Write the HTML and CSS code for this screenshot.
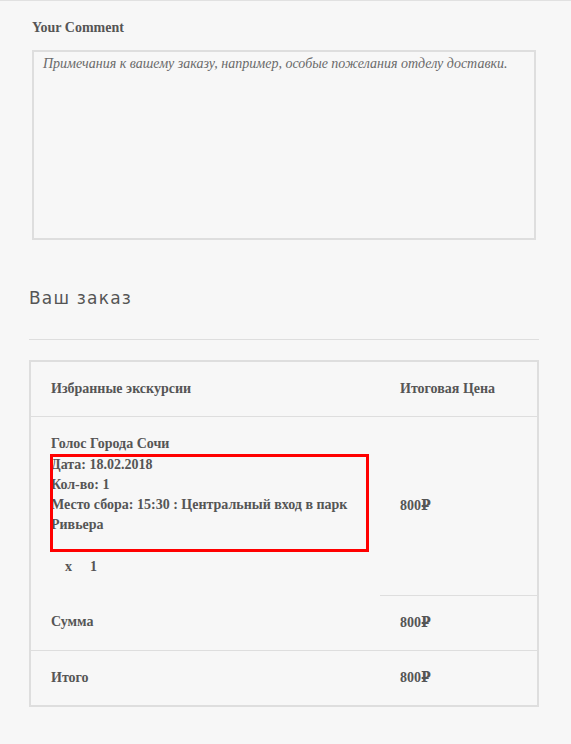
FILE: index.html
```html
<!DOCTYPE html>
<html lang="ru">
<head>
<meta charset="utf-8">
<title>Ваш заказ</title>
<link rel="stylesheet" href="styles.css">
</head>
<body>
<div class="page">
  <section class="comment">
    <label class="comment-label" for="order-comment">Your Comment</label>
    <textarea id="order-comment" class="comment-input" placeholder="Примечания к вашему заказу, например, особые пожелания отделу доставки."></textarea>
  </section>

  <h3 class="order-title">Ваш заказ</h3>
  <hr class="divider">

  <table class="order-table">
    <colgroup>
      <col class="col-name">
      <col class="col-total">
    </colgroup>
    <thead>
      <tr>
        <th class="cell">Избранные экскурсии</th>
        <th class="cell">Итоговая Цена</th>
      </tr>
    </thead>
    <tbody>
      <tr class="item-row">
        <td class="cell item-cell">
          <div class="item-name">Голос Города Сочи</div>
          <div class="item-meta">
            <div class="meta-line">Дата: 18.02.2018</div>
            <div class="meta-line">Кол-во: 1</div>
            <div class="meta-line">Место сбора: 15:30 : Центральный вход в парк Ривьера</div>
            <span class="highlight"></span>
          </div>
          <div class="item-qty"><span class="qty-x">x</span><span class="qty-n">1</span></div>
        </td>
        <td class="cell price-cell">800₽</td>
      </tr>
    </tbody>
    <tfoot>
      <tr class="subtotal-row">
        <th class="cell">Сумма</th>
        <td class="cell">800₽</td>
      </tr>
      <tr class="total-row">
        <th class="cell">Итого</th>
        <td class="cell">800₽</td>
      </tr>
    </tfoot>
  </table>
</div>
</body>
</html>
```

FILE: styles.css
```css
html, body {
  margin: 0;
  padding: 0;
  background: #f7f7f7;
}

body {
  border-top: 1px solid #e1e1e1;
  font-family: "Liberation Serif", "Times New Roman", "DejaVu Serif", serif;
  color: #555;
  min-height: 743px;
}

.page {
  padding: 0 32px 40px 29px;
}

.comment {
  padding: 0 3px;
  display: flex;
  flex-direction: column;
}

.comment-label {
  margin-top: 17px;
  font-size: 14px;
  line-height: 20px;
  font-weight: bold;
  color: #555;
}

.comment-input {
  margin-top: 12px;
  box-sizing: border-box;
  width: 504px;
  height: 190px;
  border: 2px solid #dedede;
  background: #f7f7f7;
  padding: 3px 9px;
  font-family: "Liberation Serif", "Times New Roman", serif;
  font-style: italic;
  font-size: 14px;
  line-height: 18px;
  color: #555;
  resize: none;
  outline: none;
}

.comment-input::placeholder {
  color: #6a6a6a;
  opacity: 1;
}

.order-title {
  margin: 46px 0 0 0;
  font-family: "DejaVu Sans", "Open Sans", sans-serif;
  font-weight: normal;
  font-size: 17px;
  line-height: 24px;
  letter-spacing: 1.2px;
  color: #555;
}

.divider {
  margin: 29px 0 0 0;
  border: 0;
  border-top: 1px solid #dedede;
  height: 0;
}

.order-table {
  margin-top: 20px;
  width: 510px;
  table-layout: fixed;
  border-collapse: separate;
  border-spacing: 0;
  border: 2px solid #dedede;
  font-size: 14px;
  line-height: 20px;
  font-weight: bold;
  color: #555;
}

.col-name {
  width: 349px;
}

.col-total {
  width: 157px;
}

.cell {
  text-align: left;
  padding: 17px 20px;
  font-weight: bold;
  vertical-align: top;
}

.item-row .cell {
  border-top: 1px solid #dedede;
}

.item-cell {
  padding-bottom: 18px;
}

.price-cell {
  vertical-align: middle;
}

.item-meta {
  position: relative;
  padding: 1px 0 16px 0;
}

.highlight {
  position: absolute;
  left: -1px;
  top: 0;
  width: 319px;
  height: 98px;
  box-sizing: border-box;
  border: 3px solid #ff0000;
  pointer-events: none;
}

.item-qty {
  margin-top: 6px;
  padding-left: 14px;
}

.qty-n {
  margin-left: 18px;
}

.subtotal-row td.cell {
  border-top: 1px solid #dedede;
}

.total-row .cell {
  border-top: 1px solid #dedede;
}
```
